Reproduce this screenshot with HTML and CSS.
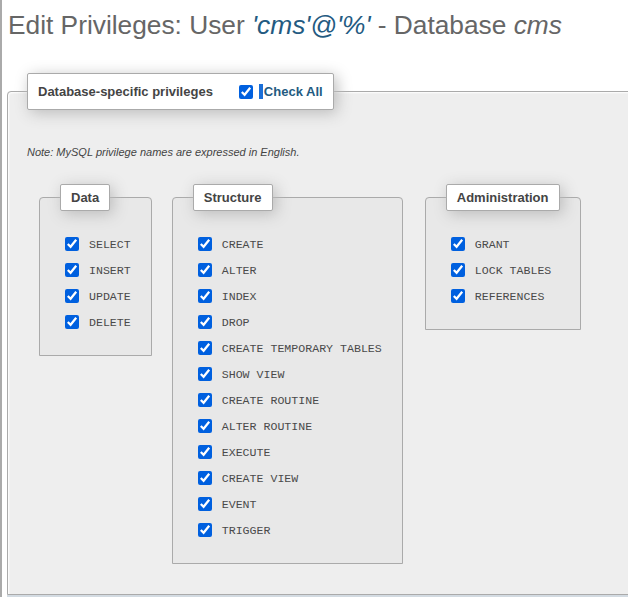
FILE: index.html
```html
<!DOCTYPE html>
<html>
<head>
<meta charset="utf-8">
<link rel="stylesheet" href="styles.css">
</head>
<body>
<div class="frame">
  <h2 class="title">Edit Privileges: User <i class="user">'cms'@'%'</i> - Database <i>cms</i></h2>
  <fieldset class="outer">
    <legend class="outer-legend">
      <div class="legend-row">
        <span>Database-specific privileges</span>
        <input type="checkbox" class="cb check-all" checked>
        <span class="check-all-label">Check All</span>
      </div>
    </legend>
    <p class="note">Note: MySQL privilege names are expressed in English.</p>
    <div class="groups">
      <fieldset class="group">
        <legend class="group-legend">Data</legend>
        <div class="item"><input type="checkbox" class="cb" checked><span>SELECT</span></div>
        <div class="item"><input type="checkbox" class="cb" checked><span>INSERT</span></div>
        <div class="item"><input type="checkbox" class="cb" checked><span>UPDATE</span></div>
        <div class="item"><input type="checkbox" class="cb" checked><span>DELETE</span></div>
      </fieldset>
      <fieldset class="group">
        <legend class="group-legend">Structure</legend>
        <div class="item"><input type="checkbox" class="cb" checked><span>CREATE</span></div>
        <div class="item"><input type="checkbox" class="cb" checked><span>ALTER</span></div>
        <div class="item"><input type="checkbox" class="cb" checked><span>INDEX</span></div>
        <div class="item"><input type="checkbox" class="cb" checked><span>DROP</span></div>
        <div class="item"><input type="checkbox" class="cb" checked><span>CREATE TEMPORARY TABLES</span></div>
        <div class="item"><input type="checkbox" class="cb" checked><span>SHOW VIEW</span></div>
        <div class="item"><input type="checkbox" class="cb" checked><span>CREATE ROUTINE</span></div>
        <div class="item"><input type="checkbox" class="cb" checked><span>ALTER ROUTINE</span></div>
        <div class="item"><input type="checkbox" class="cb" checked><span>EXECUTE</span></div>
        <div class="item"><input type="checkbox" class="cb" checked><span>CREATE VIEW</span></div>
        <div class="item"><input type="checkbox" class="cb" checked><span>EVENT</span></div>
        <div class="item"><input type="checkbox" class="cb" checked><span>TRIGGER</span></div>
      </fieldset>
      <fieldset class="group group-admin">
        <legend class="group-legend">Administration</legend>
        <div class="item"><input type="checkbox" class="cb" checked><span>GRANT</span></div>
        <div class="item"><input type="checkbox" class="cb" checked><span>LOCK TABLES</span></div>
        <div class="item"><input type="checkbox" class="cb" checked><span>REFERENCES</span></div>
      </fieldset>
    </div>
  </fieldset>
  <div class="footer"></div>
</div>
</body>
</html>
```
FILE: styles.css
```css
html, body {
  margin: 0;
  padding: 0;
  overflow: hidden;
  background: #fff;
}
body {
  font-family: "Liberation Sans", Arial, sans-serif;
  font-size: 13px;
  color: #444;
}
.frame {
  border-left: 2px solid #aaa;
  padding-left: 5px;
  height: 597px;
  box-sizing: border-box;
  overflow: hidden;
}
.title {
  margin: 0;
  padding: 10px 0 0 1px;
  font-size: 26.3px;
  line-height: 30px;
  font-weight: normal;
  color: #666;
  white-space: nowrap;
}
.title .user {
  color: #235a81;
}
.outer {
  margin: 33px 0 0 0;
  width: 700px;
  box-sizing: border-box;
  padding: 0 19px 9px 19px;
  border: 1px solid #aaa;
  border-radius: 4px 4px 0 0;
  background: #eee;
  box-shadow: 1px 1px 2px #fff inset;
}
.outer-legend,
.group-legend {
  padding: 0 10px;
  border: 1px solid #aaa;
  border-radius: 2px;
  background: #fff;
  box-shadow: 3px 3px 15px #bbb;
  font-weight: bold;
  color: #444;
}
.legend-row {
  display: flex;
  align-items: center;
  height: 35px;
}
.legend-row .check-all {
  margin: 0 6px 0 26px;
}
.check-all-label {
  color: #235a81;
  border-left: 4px solid #1b6fd8;
  padding-left: 1px;
  line-height: 15px;
}
.note {
  margin: 35px 0 0 0;
  font-size: 11px;
  line-height: 14px;
  font-style: italic;
  color: #444;
}
.groups {
  display: flex;
  align-items: flex-start;
  gap: 20px;
  margin: 25px 0 0 12px;
}
.group {
  margin: 0 0 21px 0;
  padding: 20px 20px 20px 20px;
  border: 1px solid #aaa;
  border-radius: 4px 4px 0 0;
  background: #e8e8e8;
  min-width: 0;
}
.group-admin {
  margin-left: 2px;
}
.group-legend {
  padding: 5px 10px;
  line-height: 15px;
}
.item {
  display: flex;
  align-items: center;
  height: 26px;
  white-space: nowrap;
}
.item span {
  font-family: "Liberation Mono", "Courier New", monospace;
  font-size: 11.6px;
  color: #4a4a4a;
}
.cb {
  width: 14px;
  height: 14px;
  margin: 0 10px 0 5px;
  accent-color: #0060df;
}
.footer {
  height: 10px;
  background: #d3dbe2;
  width: 700px;
}
```
